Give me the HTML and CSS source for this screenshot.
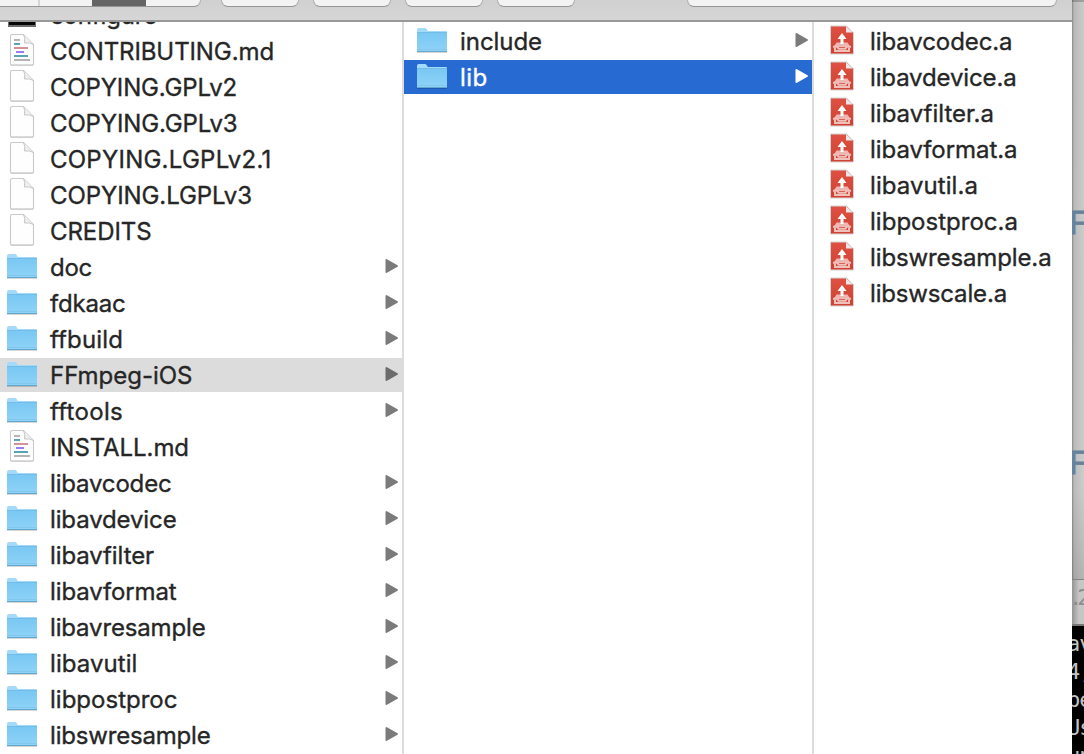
FILE: index.html
```html
<!DOCTYPE html>
<html lang="en">
<head>
<meta charset="utf-8">
<title>Finder</title>
<link rel="stylesheet" href="styles.css">
</head>
<body>
<svg class="defs" width="0" height="0">
  <defs>
    <linearGradient id="folderFill" x1="0" y1="0" x2="0" y2="1"><stop offset="0" stop-color="#79c8f3"/><stop offset="1" stop-color="#8fd2f8"/></linearGradient>
    <linearGradient id="redFill" x1="0" y1="0" x2="0" y2="1"><stop offset="0" stop-color="#df5142"/><stop offset="1" stop-color="#cf4031"/></linearGradient>
  </defs>
  <symbol id="folder" viewBox="0 0 32 28">
    <path d="M1 25.500h30v1.500H1z" fill="#000" opacity=".16"/>
    <path d="M1 4Q1 2 2.500 2H9q1 0 1.600 1l.9 1.500q.4.500 1.200.500H30q1 0 1 1v19H1z" fill="#a3daf9"/>
    <path d="M1 7h30v18.500H1z" fill="url(#folderFill)"/>
    <path d="M1 6.500h30" stroke="#72bce5" stroke-width="1"/>
    <path d="M1 23.500h30" stroke="#7cc3e9" stroke-width=".7"/>
    <path d="M1 25.500h30" stroke="#64a7cd" stroke-width="1"/>
  </symbol>
  <symbol id="page" viewBox="0 0 26 34">
    <path d="M1.500 3q0-1.500 1.500-1.500H14.500L24.500 11.500V30.500q0 1.500-1.500 1.500H3q-1.500 0-1.500-1.500z" fill="#fefefe" stroke="#c9c9c9" stroke-width="1.100"/>
    <path d="M1.500 32.200h23" stroke="#bababa" stroke-width=".7"/>
    <path d="M14.500 1.500q2 3 1 8.500 5.500-.8 9 1.500" fill="#f0f0f0" stroke="#c6c6c6" stroke-width="1"/>
  </symbol>
  <symbol id="markdown" viewBox="0 0 26 34">
    <use href="#page" width="26" height="34"/>
    <g stroke-width="2" fill="none">
      <path d="M5 7h6M5 27h16" stroke="#b5b5b5"/><path d="M5 11h6M5 23h14" stroke="#5ba3b4"/>
      <path d="M5 15h14" stroke="#d29398"/><path d="M7 19h8" stroke="#9d7cf2"/>
    </g>
  </symbol>
  <symbol id="archive" viewBox="0 0 26 32">
    <path d="M1.500 2h16.500L24.500 8.500V30h-23z" fill="url(#redFill)" stroke="#d5d5d5" stroke-width="1"/>
    <path d="M17.500 1.500l7 7V1.500z" fill="#fff"/>
    <path d="M17 2v6.500h7z" fill="#e9e7e7"/>
    <path d="M7.500 18.500h11l3 4.500h-17z" fill="#edb7b1"/>
    <path d="M6 23.500v3.500h14v-3.500" fill="none" stroke="#f0c0bb" stroke-width="2"/>
    <path d="M4 22.700h4.500l1 2h7l1-2H22" fill="none" stroke="#f0c0bb" stroke-width="2"/>
    <path d="M13 9l4.500 6h-3v5h-3v-5h-3z" fill="#fff"/>
  </symbol>
  <symbol id="terminal" viewBox="0 0 28 34">
    <path d="M0 2h28v29H0z" fill="#6b6b6b"/><path d="M1 2h26v27H1z" fill="#050505"/>
  </symbol>
  <symbol id="arrow" viewBox="0 0 14 16">
    <path d="M1.500 2v12L12 8z" fill="currentColor" stroke="currentColor" stroke-width="2" stroke-linejoin="round"/>
  </symbol>
</svg>
<div class="desktop">
  <main class="finder">
    <header class="toolbar">
      <div class="group"><i class="seg seg-a"></i><i class="seg seg-b"></i><i class="seg seg-on"></i><i class="seg seg-c"></i></div>
      <div class="button"></div><div class="button"></div><div class="button"></div><div class="button"></div>
      <div class="search"></div>
    </header>
    <div class="columns">
      <section class="column column-left" id="left"></section>
      <section class="column column-mid" id="mid"></section>
      <section class="column column-right" id="right"></section>
    </div>
  </main>
  <aside class="behind">
    <div class="editor"><span class="glyph glyph-one">F</span><span class="glyph glyph-two">F</span></div>
    <div class="tab">.2</div>
    <div class="console"><span>av</span><span>4,</span><span>be</span><span>Us</span><span>un</span></div>
  </aside>
</div>
<script src="app.js"></script>
</body>
</html>
```
FILE: styles.css
```css
* { box-sizing: border-box; }
body { margin: 0; overflow: hidden; font-family: Inter, "Liberation Sans", sans-serif; }
.defs { position: absolute; }
.desktop { display: flex; width: 1084px; height: 754px; overflow: hidden; background: #c7c7c7; }
.finder { width: 1072px; height: 754px; display: flex; flex-direction: column; background: #fff; flex: none; }
.toolbar { height: 22px; flex: none; display: flex; padding-left: 0; background: linear-gradient(#d0d0d1, #d6d6d7); border-bottom: 2px solid #989898; }
.group, .button, .search { height: 7px; flex: none; background: #f3f3f3; border: 1px solid #b0b0b0; border-top: 0; border-bottom-color: #969696; border-radius: 0 0 7px 7px; }
.group { display: flex; width: 201px; border-left: 0; border-bottom-left-radius: 0; margin-right: 20px; overflow: hidden; }
.seg { height: 7px; }
.seg-a { width: 40px; border-right: 2px solid #d5d5d5; }
.seg-b { width: 52px; }
.seg-on { width: 54px; background: #656565; }
.button { width: 78px; margin-right: 14px; }
.search { width: 370px; margin-left: 98px; }
.columns { flex: 1; display: flex; min-height: 0; }
.column { overflow: hidden; display: flex; flex-direction: column; flex: none; }
.column-left { width: 404px; border-right: 2px solid #dcdcdc; }
.column-mid { width: 410px; border-right: 2px solid #dcdcdc; padding-top: 2px; }
.column-right { width: 258px; padding-top: 2px; }
.column-left .row:first-child { margin-top: -24px; }
.row { height: 34px; margin-bottom: 2px; flex: none; display: flex; align-items: center; color: #262626; }
.icon-cell { width: 50px; flex: none; display: flex; padding-left: 6px; }
.column-mid .icon-cell { width: 56px; padding-left: 12px; }
.column-right .icon-cell { width: 56px; padding-left: 15px; }
.icon { display: block; flex: none; }
.icon-folder { width: 32px; height: 28px; margin-top: -2px; }
.icon-page, .icon-markdown { width: 26px; height: 34px; margin-left: 3px; margin-top: -3px; }
.icon-terminal { width: 28px; height: 34px; margin-left: 2px; margin-top: -5px; }
.icon-archive { width: 26px; height: 32px; }
.column-right .icon { margin-top: -2px; }
.label { font-size: 24px; line-height: 32px; padding-top: 2px; white-space: pre; -webkit-text-stroke: .35px currentColor; }
.arrow { width: 14px; height: 16px; margin-left: auto; margin-right: 3px; margin-top: -2px; color: #7b7b7b; }
.row-active { background: #dcdcdc; }
.row-active .arrow { color: #6c6c6c; }
.row-selected { background: #276ad2; color: #fff; }
.row-selected .arrow { color: #fff; }
.behind { width: 12px; height: 754px; flex: none; display: flex; flex-direction: column; overflow: hidden; background: #c7c7c7; }
.editor { height: 580px; flex: none; padding-top: 202px; border-bottom: 1px solid #828282; background: linear-gradient(90deg, rgba(0,0,0,.32), rgba(0,0,0,.08) 2px, transparent 10px), linear-gradient(#a0a0a0 2px, #c8c8c8 2px, #cacaca 490px, #b4b4b4); }
.glyph { display: block; height: 40px; line-height: 40px; margin-left: -3px; font-family: "Liberation Sans", Arial, sans-serif; font-size: 34px; color: #67829d; -webkit-text-stroke: .8px #67829d; }
.glyph-two { margin-top: 200px; }
.tab { height: 46px; flex: none; border-bottom: 2px solid #777; font: 22px/36px "DejaVu Sans Mono", monospace; letter-spacing: -5px; color: #8d8d8d; text-indent: -3px; background: linear-gradient(90deg, rgba(0,0,0,.25), transparent 7px), #c6c6c6; }
.console { flex: 1; padding-top: 4px; background: #000; color: #c4c4c4; font: 22px/28px "DejaVu Sans Mono", monospace; }
.console span { display: block; height: 28px; margin-left: -5px; letter-spacing: -1px; }
```
FILE: app.js
```js
// Each entry: [name, icon, label right edge, has children, row state]
const columns = {
  left: { x: 50, rows: [
    ["configure", "terminal", 157],
    ["CONTRIBUTING.md", "markdown", 274],
    ["COPYING.GPLv2", "page", 237],
    ["COPYING.GPLv3", "page", 237.5],
    ["COPYING.LGPLv2.1", "page", 271.5],
    ["COPYING.LGPLv3", "page", 252],
    ["CREDITS", "page", 151.5],
    ["doc", "folder", 92, true],
    ["fdkaac", "folder", 125.5, true],
    ["ffbuild", "folder", 123, true],
    ["FFmpeg-iOS", "folder", 192.5, true, "row-active"],
    ["fftools", "folder", 123, true],
    ["INSTALL.md", "markdown", 189],
    ["libavcodec", "folder", 171.5, true],
    ["libavdevice", "folder", 176.5, true],
    ["libavfilter", "folder", 154, true],
    ["libavformat", "folder", 176.5, true],
    ["libavresample", "folder", 205.5, true],
    ["libavutil", "folder", 137.5, true],
    ["libpostproc", "folder", 177.5, true],
    ["libswresample", "folder", 210.5, true]
  ] },
  mid: { x: 459, rows: [
    ["include", "folder", 541, true],
    ["lib", "folder", 486.5, true, "row-selected"]
  ] },
  right: { x: 869, rows: [
    ["libavcodec.a", "archive", 1011.5],
    ["libavdevice.a", "archive", 1015.5],
    ["libavfilter.a", "archive", 993],
    ["libavformat.a", "archive", 1016.5],
    ["libavutil.a", "archive", 977],
    ["libpostproc.a", "archive", 1017],
    ["libswresample.a", "archive", 1050.5],
    ["libswscale.a", "archive", 1006]
  ] }
};

for (const [id, column] of Object.entries(columns)) {
  const host = document.getElementById(id);
  for (const [name, icon, right, children, state] of column.rows) {
    const row = document.createElement("div");
    row.className = "row " + (state || "");
    row.innerHTML =
      `<span class="icon-cell"><svg class="icon icon-${icon}"><use href="#${icon}"/></svg></span>` +
      `<span class="label">${name}</span>` +
      (children ? `<svg class="arrow"><use href="#arrow"/></svg>` : "");
    host.append(row);
    // Tracking follows the label's allotted width.
    const label = row.querySelector(".label");
    const spacing = (right - column.x - label.getBoundingClientRect().width) / name.length;
    label.style.letterSpacing = spacing + "px";
  }
}
```
